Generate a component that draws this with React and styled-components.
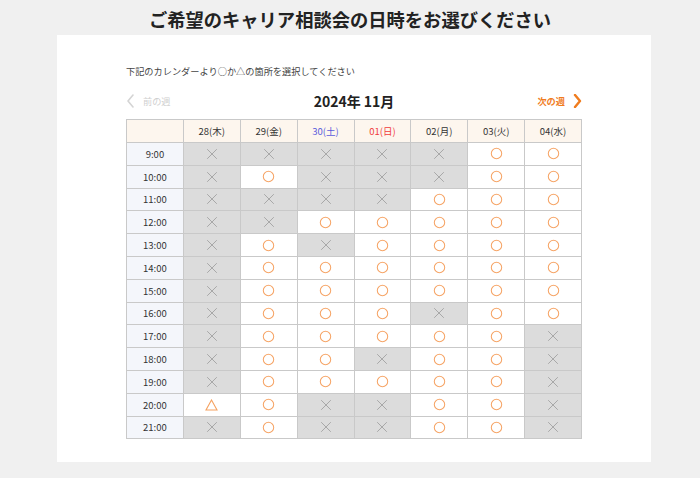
import React from 'react'
import styled, { createGlobalStyle } from 'styled-components'

const GlobalStyle = createGlobalStyle`
  body {
    margin: 0;
    background: #f0f0f0;
    font-family: "Noto Sans CJK JP", "Noto Sans", sans-serif;
    color: #333;
  }
`

const days = [
  { label: '28(木)' },
  { label: '29(金)' },
  { label: '30(土)', tone: 'sat' },
  { label: '01(日)', tone: 'sun' },
  { label: '02(月)' },
  { label: '03(火)' },
  { label: '04(水)' },
]

// o = 空き, x = 満席, t = 残りわずか
const slots = [
  ['9:00', 'xxxxxoo'],
  ['10:00', 'xoxxxoo'],
  ['11:00', 'xxxxooo'],
  ['12:00', 'xxooooo'],
  ['13:00', 'xoxoooo'],
  ['14:00', 'xoooooo'],
  ['15:00', 'xoooooo'],
  ['16:00', 'xoooxoo'],
  ['17:00', 'xooooox'],
  ['18:00', 'xooxoox'],
  ['19:00', 'xooooox'],
  ['20:00', 'toxxoox'],
  ['21:00', 'xoxxoox'],
]

const Page = styled.div`
  display: flex;
  flex-direction: column;
`

const Title = styled.h1`
  margin: 0;
  height: 35px;
  line-height: 39px;
  text-align: center;
  font-size: 18.3px;
  font-weight: 700;
  color: #222;
`

const Panel = styled.div`
  width: 594px;
  margin-left: 57px;
  box-sizing: border-box;
  background: #fff;
  padding: 29px 0 23px 69px;
`

const Lead = styled.p`
  margin: 0 0 14px;
  font-size: 9.2px;
  line-height: 14px;
  color: #444;
`

const Nav = styled.div`
  width: 456px;
  height: 18px;
  display: flex;
  align-items: center;
  justify-content: space-between;
  margin-bottom: 9px;
`

const WeekLink = styled.span`
  display: flex;
  align-items: center;
  gap: 8px;
  width: 70px;
  font-size: 9.2px;
  font-weight: ${({ active }) => (active ? 700 : 400)};
  color: ${({ active }) => (active ? '#f07c1e' : '#cfcfcf')};
  justify-content: ${({ right }) => (right ? 'flex-end' : 'flex-start')};
`

const Month = styled.span`
  font-size: 14px;
  font-weight: 700;
  color: #222;
`

const Table = styled.table`
  width: 456px;
  table-layout: fixed;
  border-collapse: collapse;
  border: 1px solid #c9c9c9;
`

const Head = styled.th`
  height: 22px;
  padding: 0;
  border: 1px solid #c9c9c9;
  background: #fdf6ee;
  font-size: 9.5px;
  font-weight: 400;
  color: ${({ tone }) => (tone === 'sat' ? '#5b5bdc' : tone === 'sun' ? '#f03c3c' : '#333')};
`

const Time = styled.td`
  height: 21.8px;
  padding: 0;
  border: 1px solid #c9c9c9;
  background: #f4f6fb;
  text-align: center;
  font-size: 9.5px;
  color: #333;
`

const Slot = styled.td`
  padding: 0;
  border: 1px solid #c9c9c9;
  background: ${({ closed }) => (closed ? '#dcdcdc' : '#fff')};
  text-align: center;
  vertical-align: middle;
  svg {
    display: block;
    margin: 0 auto;
  }
`

function Mark({ kind }) {
  if (kind === 'x') {
    return (
      <svg width="12" height="12" viewBox="0 0 12 12">
        <path d="M1.2 1.2 L10.8 10.8 M10.8 1.2 L1.2 10.8" stroke="#a8a8a8" strokeWidth="1" fill="none" />
      </svg>
    )
  }
  if (kind === 't') {
    return (
      <svg width="13" height="12" viewBox="0 0 13 12">
        <path d="M6.5 1 L12 11 L1 11 Z" stroke="#f5a261" strokeWidth="1.1" fill="none" />
      </svg>
    )
  }
  return (
    <svg width="13" height="13" viewBox="0 0 13 13">
      <circle cx="6.5" cy="6.5" r="5.2" stroke="#f6a567" strokeWidth="1.05" fill="none" />
    </svg>
  )
}

function Chevron({ dir, color, weight }) {
  const d = dir === 'left' ? 'M7 1 L2 7 L7 13' : 'M2 1 L7 7 L2 13'
  return (
    <svg width="9" height="14" viewBox="0 0 9 14">
      <path d={d} stroke={color} strokeWidth={weight} fill="none" strokeLinecap="round" strokeLinejoin="round" />
    </svg>
  )
}

export default function App() {
  return (
    <Page>
      <GlobalStyle />
      <Title>ご希望のキャリア相談会の日時をお選びください</Title>
      <Panel>
        <Lead>下記のカレンダーより○か△の箇所を選択してください</Lead>
        <Nav>
          <WeekLink>
            <Chevron dir="left" color="#d4d4d4" weight={1.6} />
            前の週
          </WeekLink>
          <Month>2024年 11月</Month>
          <WeekLink active right>
            次の週
            <Chevron dir="right" color="#f07c1e" weight={2.4} />
          </WeekLink>
        </Nav>
        <Table>
          <thead>
            <tr>
              <Head />
              {days.map(d => (
                <Head key={d.label} tone={d.tone}>{d.label}</Head>
              ))}
            </tr>
          </thead>
          <tbody>
            {slots.map(([time, marks]) => (
              <tr key={time}>
                <Time>{time}</Time>
                {marks.split('').map((m, i) => (
                  <Slot key={i} closed={m === 'x'}>
                    <Mark kind={m} />
                  </Slot>
                ))}
              </tr>
            ))}
          </tbody>
        </Table>
      </Panel>
    </Page>
  )
}
